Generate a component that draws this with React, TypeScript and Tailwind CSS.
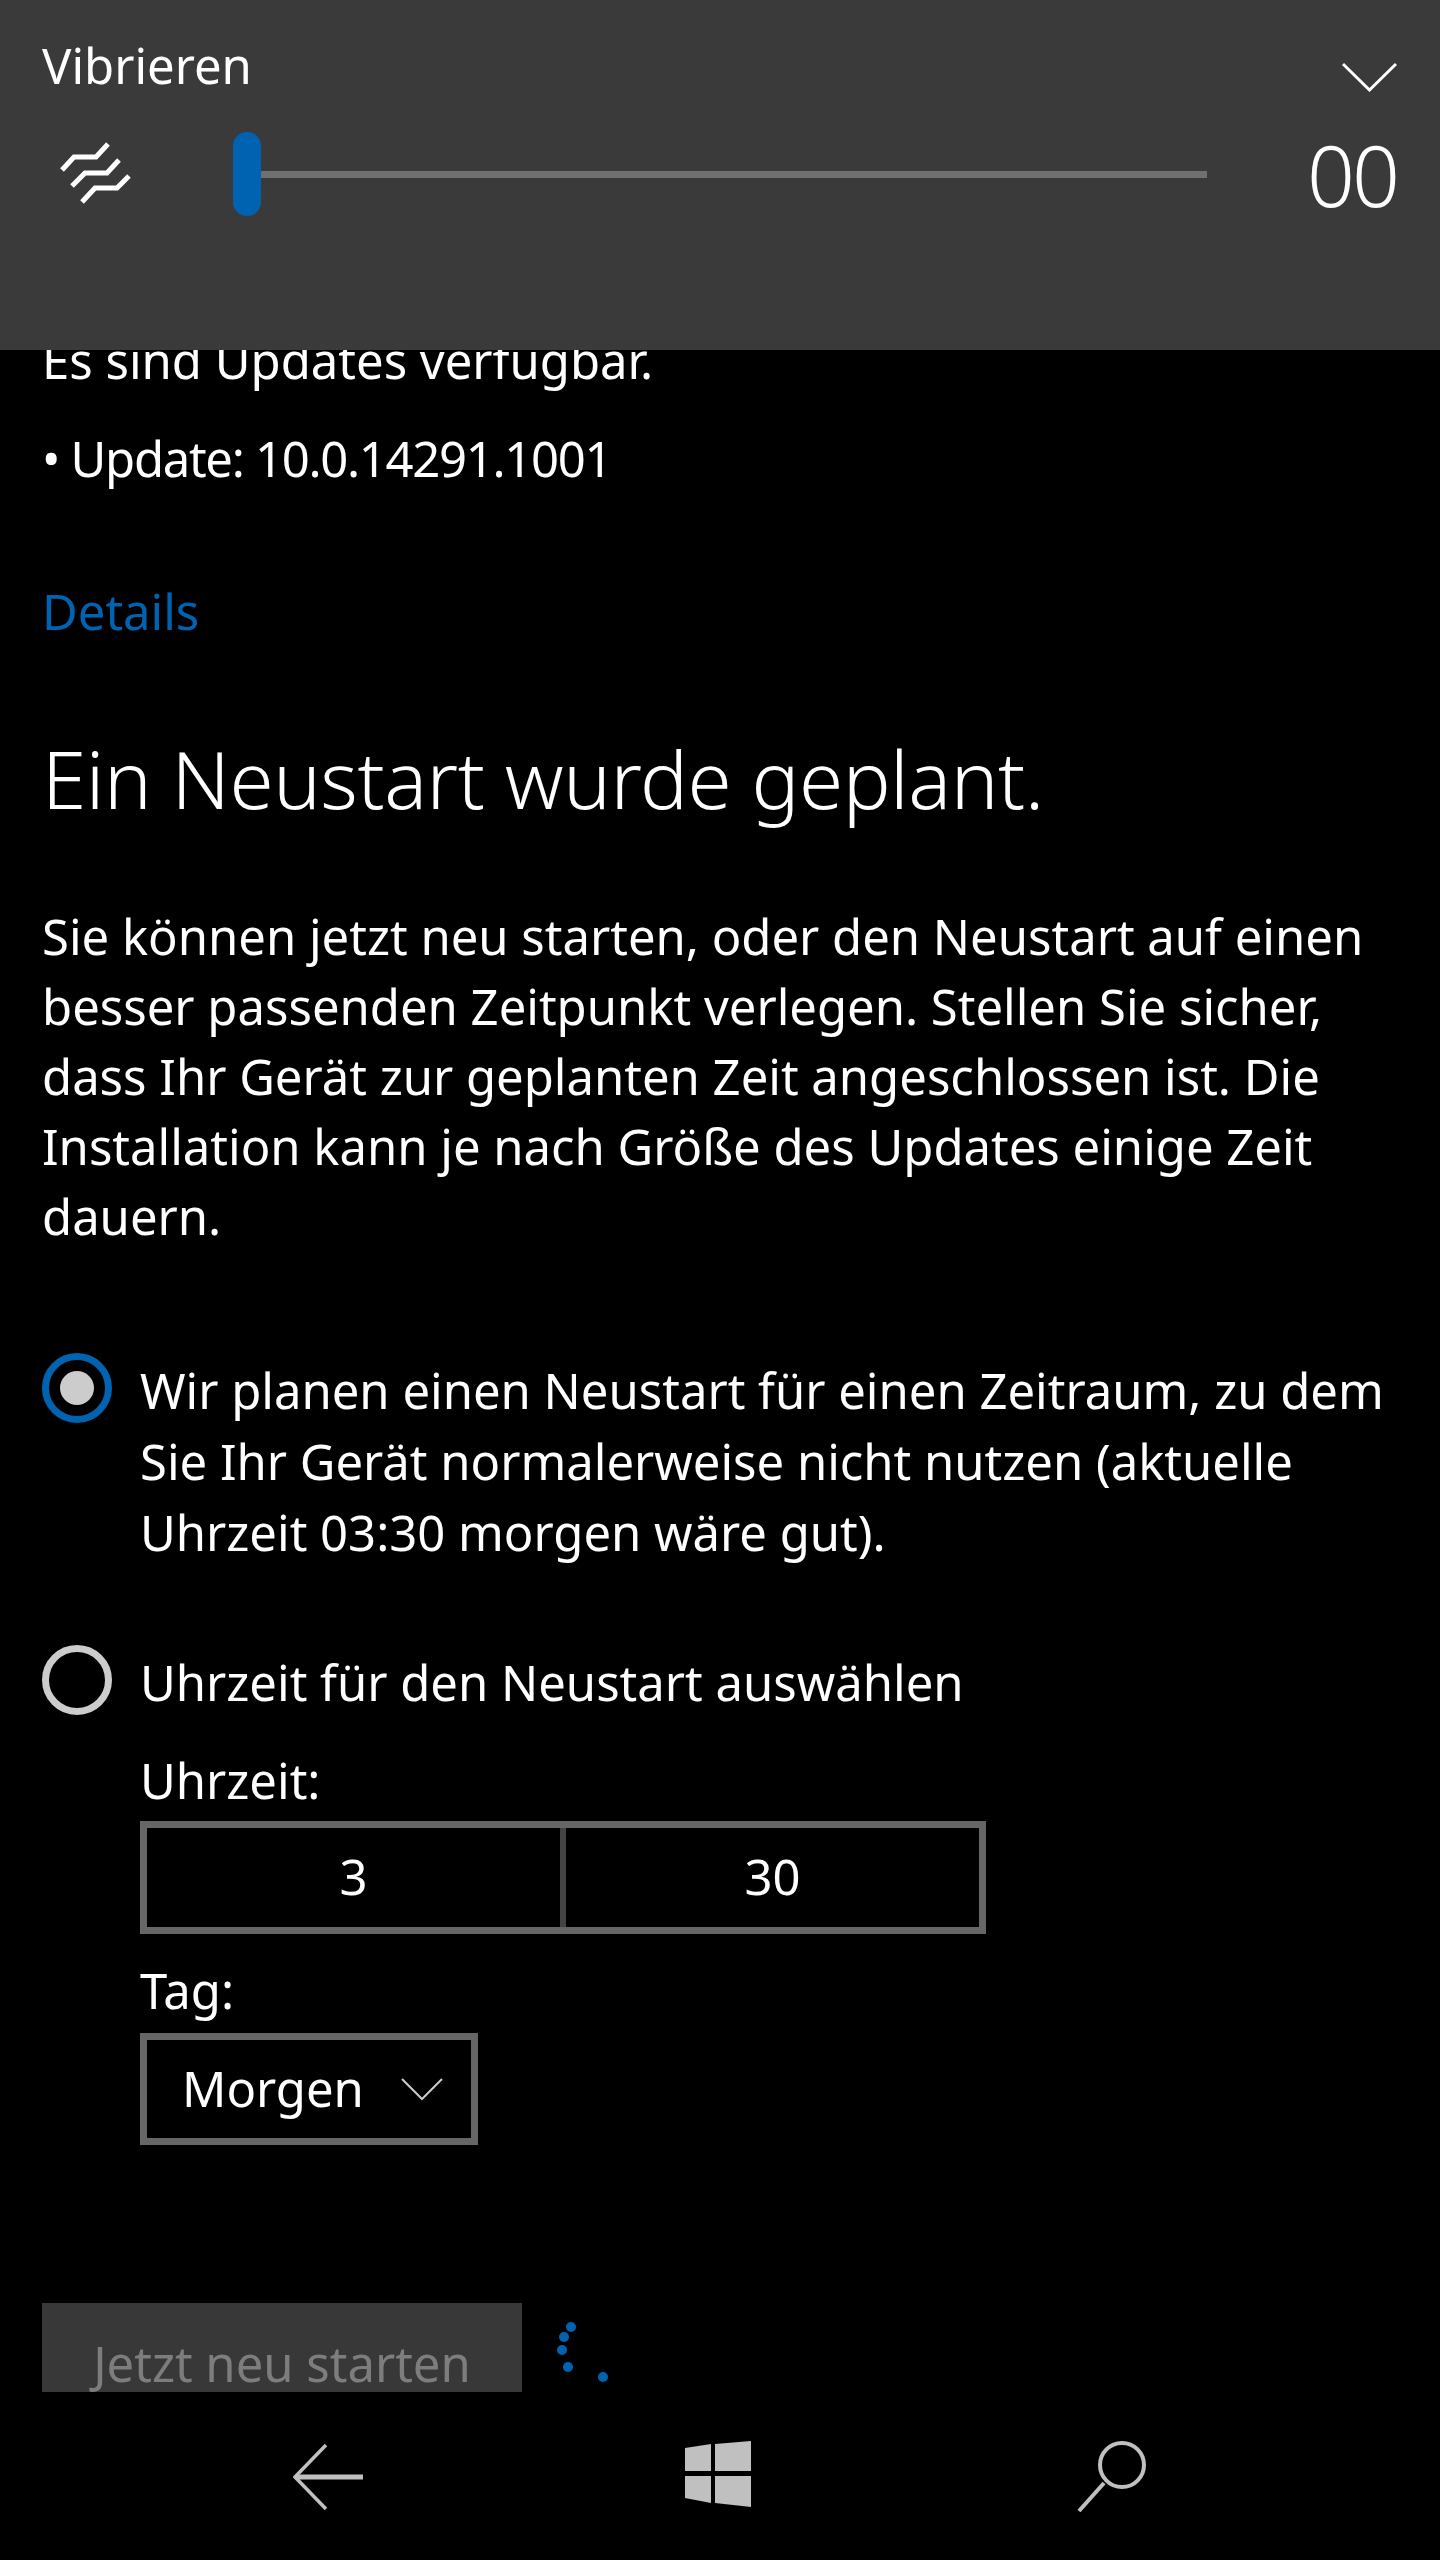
import React from 'react';

const font = { fontFamily: '"Noto Sans", "Open Sans", sans-serif' };

const VolumePanel = () => (
  <div className="relative z-10 h-[350px] shrink-0 bg-[#3a3a3a] pl-[42px] pr-[43px] pt-[37px] text-white">
    <div className="flex h-[56px] items-start justify-between">
      <span className="text-[49px] leading-[56px]">Vibrieren</span>
      <svg width="55" height="30" viewBox="0 0 55 30" className="mt-[25px]" fill="none" stroke="#fff" strokeWidth="3">
        <path d="M1 2 L27.5 28 L54 2" />
      </svg>
    </div>
    <div className="mt-[38px] flex items-center">
      <svg width="80" height="70" viewBox="0 0 80 70" className="ml-[13px] shrink-0" fill="none" stroke="#fff" strokeWidth="5">
        <path d="M7 31 L19 18 H41 L53 5" />
        <path d="M17 47 L30 34 H52 L64 21" />
        <path d="M27 63 L40 49 H62 L74 37" />
      </svg>
      <div className="ml-[98px] h-[84px] w-[28px] shrink-0 rounded-full bg-[#0063b1]" />
      <div className="h-[7px] w-[946px] shrink-0 bg-[#707070]" />
      <span className="ml-auto mt-[2px] text-[84px] font-light leading-[84px] tracking-[-3px]">00</span>
    </div>
  </div>
);

const Radio = ({ checked }: { checked?: boolean }) => (
  <div className={`flex h-[70px] w-[70px] shrink-0 items-center justify-center rounded-full border-[7px] ${checked ? 'border-[#0063b1]' : 'border-[#cccccc]'}`}>
    {checked && <div className="h-[34px] w-[34px] rounded-full bg-[#cccccc]" />}
  </div>
);

const Spinner = () => (
  <svg width="60" height="70" viewBox="0 0 60 70" className="ml-[28px] mt-[14px] shrink-0" fill="#0063b1">
    <circle cx="21" cy="10" r="5" />
    <circle cx="14" cy="20" r="5" />
    <circle cx="12" cy="33" r="5" />
    <circle cx="18" cy="50" r="5" />
    <circle cx="53" cy="60" r="5" />
  </svg>
);

const NavBar = () => (
  <div className="flex h-[168px] shrink-0 items-start bg-black pt-[49px]">
    <svg width="71" height="66" viewBox="0 0 71 66" className="ml-[293px] mt-[3px]" fill="none" stroke="#c0c0c0">
      <path d="M33 1 L2 33 L33 65" strokeWidth="3.5" />
      <path d="M2 33 H70" strokeWidth="5" />
    </svg>
    <svg width="66" height="66" viewBox="0 0 66 66" className="ml-[321px]" fill="#c0c0c0">
      <path d="M0 7 L26 3 V30 H0 Z" />
      <path d="M30 3 L66 0 V30 H30 Z" />
      <path d="M0 35 H26 V62 L0 57 Z" />
      <path d="M30 35 H66 V66 L30 62 Z" />
    </svg>
    <svg width="72" height="72" viewBox="0 0 72 72" className="ml-[325px]" fill="none" stroke="#c0c0c0">
      <circle cx="46" cy="24" r="22" strokeWidth="4" />
      <path d="M28 42 L3 70" strokeWidth="4" />
    </svg>
  </div>
);

export default function App() {
  return (
    <div className="flex h-[2560px] w-[1440px] flex-col overflow-hidden bg-black text-white" style={font}>
      <VolumePanel />
      <main className="min-h-0 flex-1 overflow-hidden pl-[42px] text-[49px]">
        <p className="-mt-[25px] leading-[70px]">Es sind Updates verfügbar.</p>
        <p className="mt-[28px] leading-[70px] tracking-[-1.3px]">• Update: 10.0.14291.1001</p>
        <a className="mt-[83px] block leading-[70px] text-[#0063b1]">Details</a>
        <h1 className="mt-[77px] text-[80px] font-light leading-[110px] tracking-[-0.45px]">Ein Neustart wurde geplant.</h1>
        <p className="mt-[68px] whitespace-nowrap leading-[70px]">
          Sie können jetzt neu starten, oder den Neustart auf einen<br />
          besser passenden Zeitpunkt verlegen. Stellen Sie sicher,<br />
          dass Ihr Gerät zur geplanten Zeit angeschlossen ist. Die<br />
          Installation kann je nach Größe des Updates einige Zeit<br />
          dauern.
        </p>
        <div className="mt-[102px] flex gap-[28px]">
          <Radio checked />
          <p className="whitespace-nowrap pt-[2px] leading-[71px]">
            Wir planen einen Neustart für einen Zeitraum, zu dem<br />
            Sie Ihr Gerät normalerweise nicht nutzen (aktuelle<br />
            Uhrzeit 03:30 morgen wäre gut).
          </p>
        </div>
        <div className="mt-[77px] flex gap-[28px]">
          <Radio />
          <div>
            <p className="pt-[2px] leading-[70px]">Uhrzeit für den Neustart auswählen</p>
            <p className="mt-[28px] leading-[70px]">Uhrzeit:</p>
            <div className="mt-[6px] flex h-[113px] w-[846px] border-[7px] border-[#666666]">
              <div className="flex flex-1 items-center justify-center border-r-[6px] border-[#444444] pb-[2px]">3</div>
              <div className="flex flex-1 items-center justify-center pb-[2px]">30</div>
            </div>
            <p className="mt-[21px] leading-[70px]">Tag:</p>
            <div className="mt-[8px] flex h-[112px] w-[338px] items-center border-[7px] border-[#666666] pl-[35px]">
              <span>Morgen</span>
              <svg width="42" height="24" viewBox="0 0 42 24" className="ml-auto mr-[28px]" fill="none" stroke="#cccccc" strokeWidth="2">
                <path d="M1 2 L21 22 L41 2" />
              </svg>
            </div>
          </div>
        </div>
        <div className="mt-[158px] flex items-start">
          <div className="h-[160px] w-[480px] shrink-0 bg-[#383838] pt-[25px] text-center leading-[70px] text-[#7d7d7d]">
            Jetzt neu starten
          </div>
          <Spinner />
        </div>
      </main>
      <NavBar />
    </div>
  );
}
